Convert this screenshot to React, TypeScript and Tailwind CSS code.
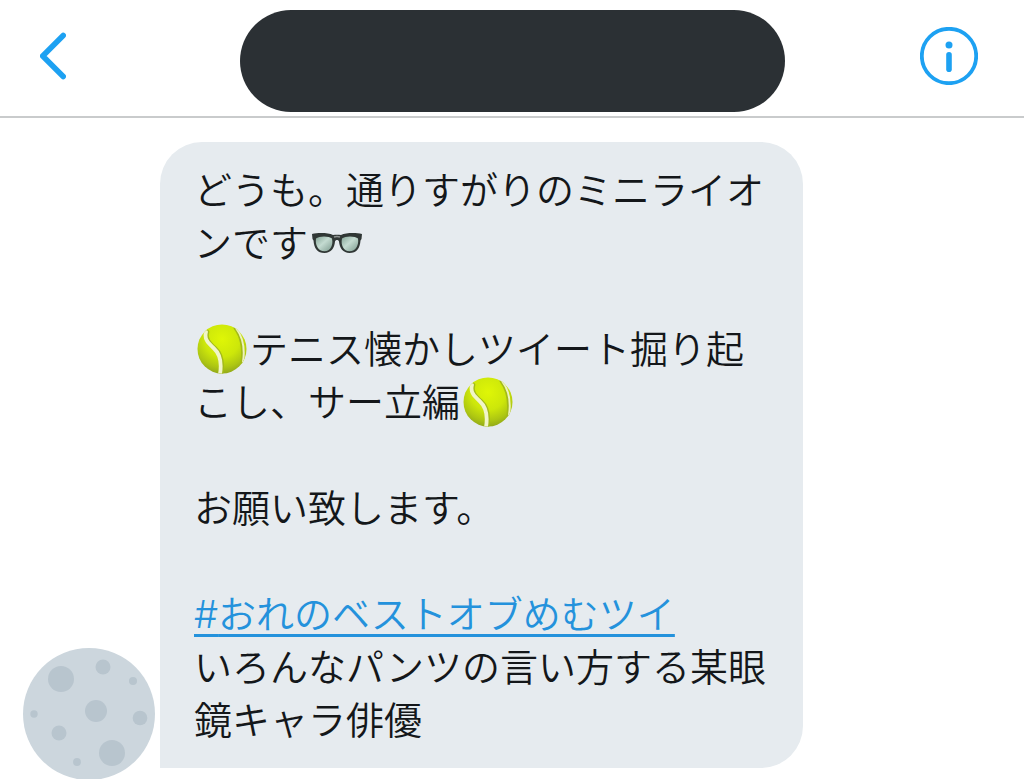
import { useId } from 'react';

interface Crater {
  cx: number;
  cy: number;
  r: number;
}

const craters: Crater[] = [
  { cx: 38, cy: 31, r: 13 },
  { cx: 80, cy: 19, r: 7.5 },
  { cx: 110, cy: 33, r: 4 },
  { cx: 73, cy: 63, r: 11 },
  { cx: 11, cy: 66, r: 3.7 },
  { cx: 117, cy: 70, r: 7.3 },
  { cx: 36, cy: 85, r: 7.5 },
  { cx: 89, cy: 105, r: 13 },
  { cx: 54, cy: 114, r: 3.9 },
];

function Avatar() {
  return (
    <svg viewBox="0 0 132 132" className="w-[132px] h-[132px] shrink-0" role="img" aria-label="アバター">
      <circle cx="66" cy="66" r="66" fill="#ccd6dd" />
      {craters.map((c) => (
        <circle key={`${c.cx}-${c.cy}`} cx={c.cx} cy={c.cy} r={c.r} fill="#b8c5ce" />
      ))}
    </svg>
  );
}

function TennisBall() {
  const id = useId();
  return (
    <svg viewBox="0 0 50 50" className="inline-block w-[50px] h-[50px] mx-[3px] -my-2 align-[-3px]" role="img" aria-label="テニスボール">
      <defs>
        <radialGradient id={id} cx="0.5" cy="0.3" r="0.72">
          <stop offset="0" stopColor="#dff606" />
          <stop offset="0.5" stopColor="#cde70a" />
          <stop offset="0.8" stopColor="#adc612" />
          <stop offset="1" stopColor="#8fa61a" />
        </radialGradient>
        <clipPath id={`${id}c`}>
          <circle cx="25" cy="25" r="24.5" />
        </clipPath>
      </defs>
      <circle cx="25" cy="25" r="24.5" fill={`url(#${id})`} />
      <g clipPath={`url(#${id}c)`} fill="none" strokeLinecap="round">
        <path d="M10 8C8 15 12 19 18 24.5C24 30 26 38 24 50" stroke="#a3ba18" strokeWidth="4.6" />
        <path d="M9 8C7 15 11 19 17 24.5C23 30 25 38 23 50" stroke="#f1f5c9" strokeWidth="3.8" />
        <path d="M38 4C44 12 47 22 45 38" stroke="#a3ba18" strokeWidth="3" />
        <path d="M39 4C45 12 48.500 22 46 38" stroke="#edf2bf" strokeWidth="2" />
      </g>
    </svg>
  );
}

function Glasses() {
  const id = useId();
  return (
    <svg viewBox="0 0 52 22" className="inline-block w-[52px] h-[22px] mx-[3px] align-[3px]" role="img" aria-label="眼鏡">
      <defs>
        <linearGradient id={id} x1="0" y1="0" x2="1" y2="1">
          <stop offset="0" stopColor="#86a698" />
          <stop offset="0.45" stopColor="#c4dbd1" />
          <stop offset="1" stopColor="#7d9b8f" />
        </linearGradient>
      </defs>
      <path
        d="M1 2C7 .6 17 .6 22 3C24.500 2.500 27.500 2.500 30 3C35 .6 45 .6 51 2L50.500 7L49.500 8.500C49 16.500 45.500 21 38.500 21C32 21 28.500 16 28 9.500C27.500 7.500 24.500 7.500 24 9.500C23.500 16 20 21 13.500 21C6.500 21 3 16.500 2.500 8.500L1.500 7Z"
        fill="#303735"
      />
      <path d="M5 6.500C8 3.800 18 3.800 21 6.500C22.500 13 19.500 19.200 13.500 19.200C7 19.200 4 13 5 6.500Z" fill={`url(#${id})`} />
      <path d="M31 6.500C34 3.800 44 3.800 47 6.500C48 13 45 19.200 38.500 19.200C32.500 19.200 29.500 13 31 6.500Z" fill={`url(#${id})`} />
      <path d="M23 5C25 4.400 27 4.400 29 5" fill="none" stroke="#8d9391" strokeWidth="1.500" />
    </svg>
  );
}

function Header() {
  return (
    <header className="flex items-start shrink-0 border-b-2 border-[#c9cbcc]">
      <div className="flex items-center w-60 h-28 pl-10">
        <button type="button" aria-label="戻る">
          <svg viewBox="0 0 26 48" className="w-[26px] h-12" fill="none" stroke="#1da1f2" strokeWidth="5.6" strokeLinecap="round" strokeLinejoin="round">
            <path d="M23.2 3.5L2.7 24L23.2 44.5" />
          </svg>
        </button>
      </div>
      <div className="flex-1 h-[102px] mt-2.5 mb-1 rounded-full bg-[#2b3034]" />
      <div className="flex items-center justify-end w-[239px] h-28 pr-[46px]">
        <button type="button" aria-label="会話の情報">
          <svg viewBox="0 0 58 58" className="w-[58px] h-[58px]">
            <circle cx="29" cy="29" r="27.2" fill="none" stroke="#1da1f2" strokeWidth="3.8" />
            <circle cx="29" cy="18" r="3.5" fill="#1da1f2" />
            <path d="M29 27.7V42.3" stroke="#1da1f2" strokeWidth="5.6" strokeLinecap="round" />
          </svg>
        </button>
      </div>
    </header>
  );
}

function Message() {
  return (
    <div className="flex-1 min-w-0 max-w-[643px] mb-3 px-[34px] pt-[19px] pb-6 rounded-[42px] rounded-bl-none bg-[#e6ebef] text-[38px] leading-[53px] font-[350] text-[#14171a]">
      <p>
        どうも。通りすがりのミニライオンです
        <Glasses />
      </p>
      <br />
      <p>
        <TennisBall />
        テニス懐かしツイート掘り起こし、サー立編
        <TennisBall />
      </p>
      <br />
      <p>お願い致します。</p>
      <br />
      <p>
        <a href="#hashtag" className="text-[#2492dc] underline decoration-[3px] underline-offset-[6px] [text-decoration-skip-ink:none]">
          <span className="leading-none font-[Inter,sans-serif]">#</span>おれのベストオブめむツイ
        </a>
      </p>
      <p>いろんなパンツの言い方する某眼鏡キャラ俳優</p>
    </div>
  );
}

export default function App() {
  return (
    <div lang="ja" className="flex flex-col h-screen overflow-hidden bg-white font-['Noto_Sans_CJK_JP',sans-serif]">
      <Header />
      <main className="flex items-end gap-[5px] pl-[23px] pr-6 pt-6">
        <Avatar />
        <Message />
      </main>
    </div>
  );
}
